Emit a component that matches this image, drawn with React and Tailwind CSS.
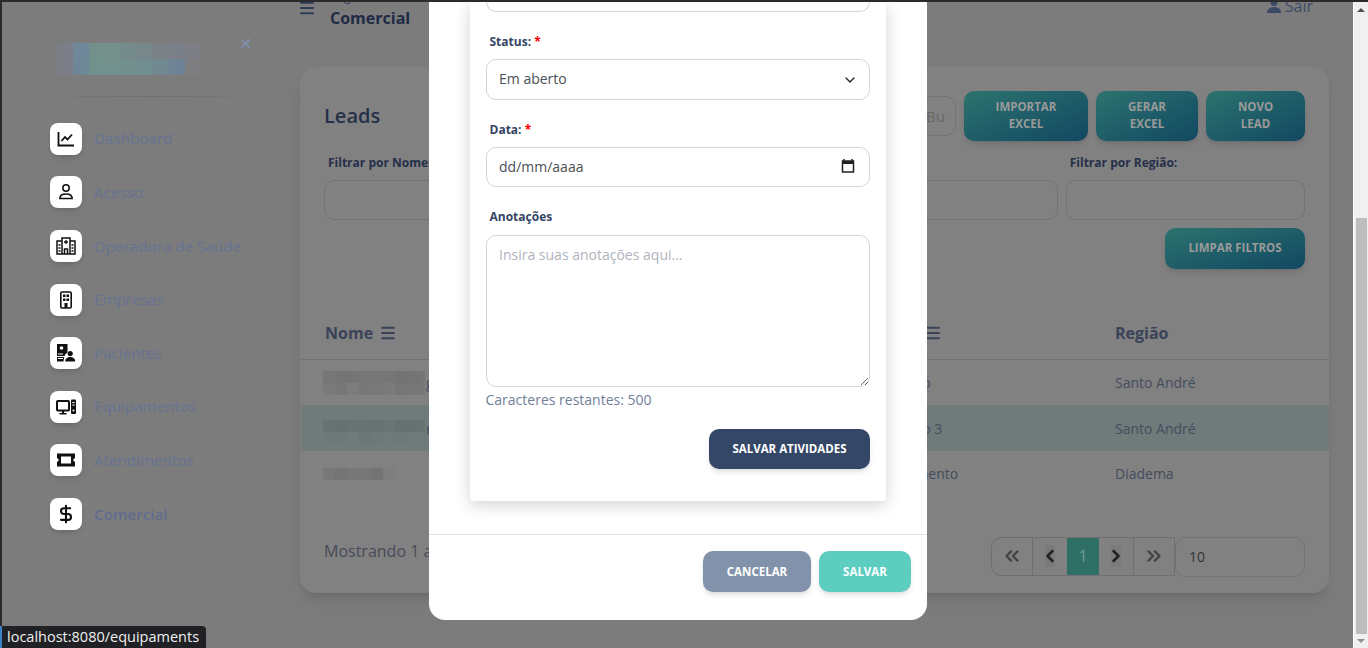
import React from 'react';
import { ChevronDown, ChevronLeft, ChevronRight, ChevronsLeft, ChevronsRight, DollarSign, Menu, X } from 'lucide-react';

const ChartIcon = () => (
  <svg width="18" height="18" viewBox="0 0 18 18" fill="none" stroke="#111" strokeWidth="1.8">
    <path d="M1.500 2v13.500h15.500" />
    <path d="M4.500 11l3.500-4 2.500 2.500 4.500-5" />
  </svg>
);

const UserIcon = () => (
  <svg width="18" height="18" viewBox="0 0 18 18" fill="none" stroke="#111" strokeWidth="1.5">
    <circle cx="9" cy="5" r="3.2" />
    <path d="M2.800 15.500c0-3 2.800-4.600 6.200-4.600s6.200 1.600 6.200 4.600z" />
  </svg>
);

const HospitalIcon = () => (
  <svg width="20" height="18" viewBox="0 0 20 18" fill="none" stroke="#111" strokeWidth="1.500">
    <path d="M6 4H1v13h18V4h-5" />
    <path d="M6 17V1h8v16" />
    <path d="M10 3v4M8 5h4" strokeWidth="1.300" />
    <path d="M8.500 17v-5h3v5" />
    <path d="M2.500 8h2M2.500 11h2M2.500 14h2M15.500 8h2M15.500 11h2M15.500 14h2" />
  </svg>
);

const BuildingIcon = () => (
  <svg width="14" height="18" viewBox="0 0 14 18" fill="#111">
    <rect x="1.800" y="1" width="10.400" height="16" rx="1.200" fill="none" stroke="#111" strokeWidth="1.600" />
    <path d="M4 3.500h2.500V6H4zm3.500 0H10V6H7.500zM4 7.500h2.500V10H4zm3.500 0H10V10H7.500zM5.500 12h3v5h-3z" />
  </svg>
);

const PatientIcon = () => (
  <svg width="20" height="20" viewBox="0 0 20 20" fill="#111">
    <path d="M1 1h10.500v8.500c-1.500.8-2.500 2-3 3.500H1zm0 13h7.200l-.7 4.500H1z" />
    <circle cx="5.500" cy="5" r="1.800" fill="#fff" />
    <path d="M2 10.500h5v1H2zm0 4.500h5v1H2z" fill="#fff" />
    <circle cx="14.200" cy="10.500" r="2.600" />
    <path d="M9.200 18.500c0-2.800 2.200-4.500 5-4.500s5 1.700 5 4.500z" />
  </svg>
);

const ComputerIcon = () => (
  <svg width="20" height="18" viewBox="0 0 20 18" fill="#111">
    <rect x="1" y="3" width="12" height="9.500" rx="0.800" fill="none" stroke="#111" strokeWidth="2" />
    <path d="M6 13h2v2h2.500v1.500h-7V15H6z" />
    <path d="M15 2.500a1 1 0 0 1 1-1h3a1 1 0 0 1 1 1V15a1 1 0 0 1-1 1h-3a1 1 0 0 1-1-1z" />
    <path d="M16.300 4h2.400v1h-2.400zm0 2.500h2.400v1h-2.400z" fill="#fff" />
    <circle cx="17.500" cy="12.500" r="1" fill="#fff" />
  </svg>
);

const TicketIcon = () => (
  <svg width="20" height="20" viewBox="0 0 20 20" fill="#111" fillRule="evenodd">
    <path d="M1 3.500h18v4.800a1.700 1.700 0 0 0 0 3.400v4.800H1v-4.800a1.700 1.700 0 0 0 0-3.400zM5 6.500v7h10v-7z" />
  </svg>
);

const CalendarIcon = () => (
  <svg width="14" height="14" viewBox="0 0 14 14" fill="none" className="shrink-0">
    <path d="M3 0v2M11 0v2" stroke="#222" strokeWidth="1.500" />
    <rect x="1.500" y="2" width="11" height="11" stroke="#222" strokeWidth="1.500" />
    <path d="M1 2h12v3H1z" fill="#222" />
  </svg>
);

const navItems = [
  { label: 'Dashboard', icon: <ChartIcon /> },
  { label: 'Acesso', icon: <UserIcon /> },
  { label: 'Operadora de Saúde', icon: <HospitalIcon /> },
  { label: 'Empresas', icon: <BuildingIcon /> },
  { label: 'Pacientes', icon: <PatientIcon /> },
  { label: 'Equipamentos', icon: <ComputerIcon /> },
  { label: 'Atendimentos', icon: <TicketIcon /> },
  { label: 'Comercial', icon: <DollarSign size={20} color="#111" strokeWidth={2.5} />, active: true },
];

const logoCells = [
  'bg-[#7b7e87]', 'bg-[#6f8798]', 'bg-[#73908a]', 'bg-[#73908a]', 'bg-[#758a8a]', 'bg-[#77878a]', 'bg-[#7a8287]', 'bg-[#7b7f88]', 'bg-[#7d7e85]',
  'bg-[#7b7e87]', 'bg-[#6d8797]', 'bg-[#71928c]', 'bg-[#72918c]', 'bg-[#728f8c]', 'bg-[#708d8f]', 'bg-[#718891]', 'bg-[#6e8395]', 'bg-[#7e7e81]',
];

const rowOneCells = [
  'bg-[#767676]', 'bg-[#747474]', 'bg-[#757575]', 'bg-[#767676]', 'bg-[#777777]', 'bg-[#767676]', 'bg-[#737373]', 'bg-[#747474]', 'bg-[#767676]',
  'bg-[#7a7a7a]', 'bg-[#777777]', 'bg-[#7c7c7c]', 'bg-[#777777]', 'bg-[#787878]', 'bg-[#7b7b7b]', 'bg-[#767676]', 'bg-[#777777]', 'bg-[#777777]',
];

const rowTwoCells = [
  'bg-[#687272]', 'bg-[#677171]', 'bg-[#687373]', 'bg-[#697373]', 'bg-[#687272]', 'bg-[#6a7474]', 'bg-[#667070]', 'bg-[#677171]', 'bg-[#687272]',
  'bg-[#6d7979]', 'bg-[#6d7979]', 'bg-[#6f7b7b]', 'bg-[#6b7777]', 'bg-[#6d7878]', 'bg-[#6e7a7a]', 'bg-[#6d7878]', 'bg-[#6e7979]', 'bg-[#6e7979]',
];

const rowThreeCells = ['bg-[#787878]', 'bg-[#747474]', 'bg-[#777777]', 'bg-[#777777]', 'bg-[#747474]', 'bg-[#7e7e7e]'];

const gradientBtn = 'rounded-[10px] bg-gradient-to-br from-[#2d736e] to-[#124862] text-[11.5px] leading-[17px] font-bold text-[#9a9a9a] shadow-md text-center pb-[2px]';

const Mosaic = ({ cells, cols }) => (
  <div className={`grid w-[102px] overflow-hidden shrink-0 ${cols}`}>
    {cells.map((c, i) => <div key={i} className={`h-3 ${c}`} />)}
  </div>
);

const Sidebar = () => (
  <aside className="w-[298px] shrink-0">
    <div className="flex h-[94px] pl-[55px] pt-[41px]">
      <div className="grid grid-cols-[repeat(9,16px)] h-8 w-[144px]">
        {logoCells.map((c, i) => <div key={i} className={`h-4 ${c}`} />)}
      </div>
      <X size={15} strokeWidth={2.5} className="text-[#7f90b8] ml-[37px] -mt-[7px]" />
    </div>
    <div className="h-px mx-[33px] bg-gradient-to-r from-transparent via-[#6f6f6f] to-transparent" />
    <nav className="pt-[15px] pl-[48px]">
      {navItems.map(item => (
        <div key={item.label} className={`flex items-center h-[53.6px] gap-3 ${item.active ? '-ml-[14px] pl-[14px] w-[218px] rounded-lg bg-[#7d7d7d]' : ''}`}>
          <div className="w-8 h-8 rounded-lg bg-white flex items-center justify-center shadow-md">{item.icon}</div>
          <span className={`text-[15.2px] ${item.active ? 'font-semibold text-[#5f6c8e]' : 'text-[#667393]'}`}>{item.label}</span>
        </div>
      ))}
    </nav>
  </aside>
);

const TopBar = () => (
  <header className="flex justify-between h-[65px] pr-[40px] text-[#2e3a56]">
    <div className="flex">
      <Menu size={18} strokeWidth={2.5} className="-ml-[2px] -mt-[3px] text-[#2e3a56]" />
      <div className="ml-[14px] -mt-[13px]">
        <div className="text-[12px] leading-4">Pagina</div>
        <div className="mt-[2px] text-[16px] leading-[22px] font-bold text-[#1f2a44]">Comercial</div>
      </div>
    </div>
    <div className="flex items-center gap-1 h-2 text-[16px] text-[#3d4a66]">
      <svg width="14" height="14" viewBox="0 0 14 14" fill="#3d4a66">
        <circle cx="7" cy="3.500" r="3.500" />
        <path d="M0 14c0-4 3-6 7-6s7 2 7 6z" />
      </svg>
      Sair
    </div>
  </header>
);

const inputBase = 'h-10 border border-[#737373] rounded-[10px] bg-transparent';

const TableRow = ({ cells, cols, trail, status, region, highlight, offset }) => (
  <div className={`grid grid-cols-[572px_242px_1fr] h-[45.7px] items-center text-[14px] text-[#454c5e] ${highlight ? 'bg-[#6f7b7b]' : ''}`}>
    <div className="flex items-center pl-[22px]">
      <div className={offset}><Mosaic cells={cells} cols={cols} /></div>
      {trail && <span className="ml-px">{trail}</span>}
    </div>
    <div>{status}</div>
    <div>{region}</div>
  </div>
);

const LeadsCard = () => (
  <section className="w-[1029px] h-[526px] rounded-2xl bg-[#818181] pt-6 shadow-lg">
    <div className="px-6">
      <div className="flex items-center justify-between h-[50px]">
        <h2 className="text-[20px] font-semibold text-[#25304a]">Leads</h2>
        <div className="flex items-center gap-2">
          <input placeholder="Buscar" className="w-[56px] h-10 pl-[25px] pr-[10px] border border-[#737373] rounded-[10px] text-[15px] placeholder:text-[#666666] outline-none" />
          <button className={`${gradientBtn} w-[124px] h-[50px]`}>IMPORTAR<br />EXCEL</button>
          <button className={`${gradientBtn} w-[102px] h-[50px]`}>GERAR<br />EXCEL</button>
          <button className={`${gradientBtn} w-[99px] h-[50px]`}>NOVO<br />LEAD</button>
        </div>
      </div>
      <div className="grid grid-cols-4 gap-x-2 mt-[13px]">
        {['Filtrar por Nome:', 'Filtrar por Status:', 'Filtrar por CPF:', 'Filtrar por Região:'].map(label => (
          <div key={label}>
            <div className="h-[18px] mb-2 pl-1 text-[12px] leading-[18px] font-bold text-[#25304a]">{label}</div>
            <div className={inputBase} />
          </div>
        ))}
      </div>
      <div className="flex justify-end mt-2">
        <button className={`${gradientBtn} w-[140px] h-[41px] text-[11.2px]`}>LIMPAR FILTROS</button>
      </div>
    </div>
    <div className="mt-[38px] ml-px">
      <div className="grid grid-cols-[572px_242px_1fr] h-[52.6px] items-center border-b border-[#727272] text-[16px] font-bold text-[#3a4358]">
        <div className="flex items-center gap-[6px] pl-[24px]">Nome <Menu size={18} strokeWidth={2.5} /></div>
        <div className="flex items-center">Status <Menu size={18} strokeWidth={2.5} /></div>
        <div>Região</div>
      </div>
      <TableRow cells={rowOneCells} cols="grid-cols-[repeat(9,12px)]" trail="g" status="Contrato" region="Santo André" offset="mt-[1px]" />
      <TableRow cells={rowTwoCells} cols="grid-cols-[repeat(9,12px)]" trail="r" status="Contrato 3" region="Santo André" highlight offset="mt-[8px]" />
      <TableRow cells={rowThreeCells} cols="grid-cols-[repeat(6,12px)]" status="Atendimento" region="Diadema" />
    </div>
    <div className="flex justify-between px-6 mt-[40.3px] h-10">
      <span className="text-[16px] leading-[28px] text-[#474c58]">Mostrando 1 a 3 de 3 registros</span>
      <div className="flex items-start h-10">
        <div className="flex h-[39px] border border-[#6f6f6f] rounded-l-[10px] text-[#444444]">
          <div className="w-[40px] flex items-center justify-center"><ChevronsLeft size={22} strokeWidth={2.5} /></div>
          <div className="w-[35px] flex items-center justify-center border-l border-[#6f6f6f] text-[#222222]">
            <div className="w-[10px] h-[22px] bg-[#7a7a7a] flex items-center justify-center"><ChevronLeft size={20} strokeWidth={3} className="shrink-0" /></div>
          </div>
          <div className="w-[32px] h-[37px] bg-[#2f6f66] flex items-center justify-center text-[16px] text-[#6e9c94]">1</div>
          <div className="w-[34px] flex items-center justify-center text-[#222222]">
            <div className="w-[10px] h-[22px] bg-[#7a7a7a] flex items-center justify-center"><ChevronRight size={20} strokeWidth={3} className="shrink-0" /></div>
          </div>
          <div className="w-[41px] flex items-center justify-center border-l border-[#6f6f6f]"><ChevronsRight size={22} strokeWidth={2.5} /></div>
        </div>
        <div className={`${inputBase} w-[130px] flex items-center pl-[13px] text-[14px] text-[#333333]`}>10</div>
      </div>
    </div>
  </section>
);

const labelCls = 'h-[18px] px-[3.5px] mt-[21px] text-[12px] leading-[18px] font-bold text-[#344563]';
const fieldCls = 'w-full border border-[#d2d6da] rounded-[10px] px-3 text-[14px] text-[#495057] bg-white';

const Modal = () => (
  <div className="absolute left-[427px] top-0 w-[498px] h-[618px] bg-white rounded-b-2xl flex flex-col z-10">
    <div className="mx-[41px] h-[499px] bg-white rounded-b shadow-[0_4px_16px_rgba(0,0,0,0.18)] px-4">
      <div className="h-[10px] border border-t-0 border-[#d2d6da] rounded-b-[10px]" />
      <div className={`${labelCls} mb-2`}>Status: <span className="text-[#ff0000]">*</span></div>
      <div className="relative">
        <select className={`${fieldCls} h-[41px] pb-[2px] appearance-none outline-none`}>
          <option>Em aberto</option>
        </select>
        <ChevronDown size={16} strokeWidth={2} className="absolute right-[12px] top-[13px] text-[#222222] pointer-events-none" />
      </div>
      <div className={`${labelCls} mb-2`}>Data: <span className="text-[#ff0000]">*</span></div>
      <div className={`${fieldCls} h-10 pb-[2px] flex items-center justify-between pr-[14px]`}>
        dd/mm/aaaa
        <CalendarIcon />
      </div>
      <div className={`${labelCls} mb-[9px]`}>Anotações</div>
      <textarea placeholder="Insira suas anotações aqui..." className={`${fieldCls} block h-[152px] py-2 outline-none placeholder:text-[#b0b4bc]`} />
      <div className="h-[19px] mt-[3px] -ml-[0.5px] text-[14px] leading-[19px] text-[#72809a]">Caracteres restantes: 500</div>
      <div className="flex justify-end mt-5">
        <button className="w-[161px] h-10 rounded-[10px] bg-[#344767] text-[11.5px] font-bold text-white shadow-md">SALVAR ATIVIDADES</button>
      </div>
    </div>
    <div className="mt-[33px] flex-1 border-t border-[#dee2ea] flex justify-end gap-2 pt-4 pr-4">
      <button className="w-[108px] h-[41px] rounded-[10px] bg-[#8392ab] text-[11.5px] font-bold text-white shadow-md">CANCELAR</button>
      <button className="w-[92px] h-[41px] rounded-[10px] bg-[#5dcdbf] text-[11.5px] font-bold text-white shadow-md">SALVAR</button>
    </div>
  </div>
);

const Scrollbar = () => (
  <div className="w-[15px] shrink-0 bg-[#f0f0f0] border-l border-white flex flex-col items-center">
    <svg width="8" height="4" viewBox="0 0 8 4" className="mt-[6px]"><path d="M4 0l4 4H0z" fill="#505050" /></svg>
    <div className="w-[11px] h-[416px] mt-[206px] bg-[#bdbdbd]" />
    <svg width="8" height="4" viewBox="0 0 8 4" className="mt-[5px]"><path d="M0 0h8L4 4z" fill="#909090" /></svg>
  </div>
);

const App = () => (
  <div className="relative w-[1368px] h-[648px] overflow-hidden flex flex-col font-['Open_Sans',sans-serif]">
    <div className="h-[2px] shrink-0 bg-[#2b2b2b] z-20" />
    <div className="flex flex-1 min-h-0">
      <div className="w-[2px] shrink-0 bg-[#2b2b2b]" />
      <div className="relative flex flex-1 min-w-0 bg-[#7c7c7c]">
        <Sidebar />
        <main className="flex-1">
          <TopBar />
          <LeadsCard />
        </main>
        <Modal />
      </div>
      <Scrollbar />
    </div>
    <div className="absolute left-0 bottom-0 w-[206px] h-[22px] bg-[#202124] rounded-tr-[4px] border-l-2 border-[#3b82c4] pl-[5px] text-[14.5px] leading-[22px] text-[#f0f0f0] z-30 whitespace-nowrap">
      localhost:8080/equipaments
    </div>
  </div>
);

export default App;
